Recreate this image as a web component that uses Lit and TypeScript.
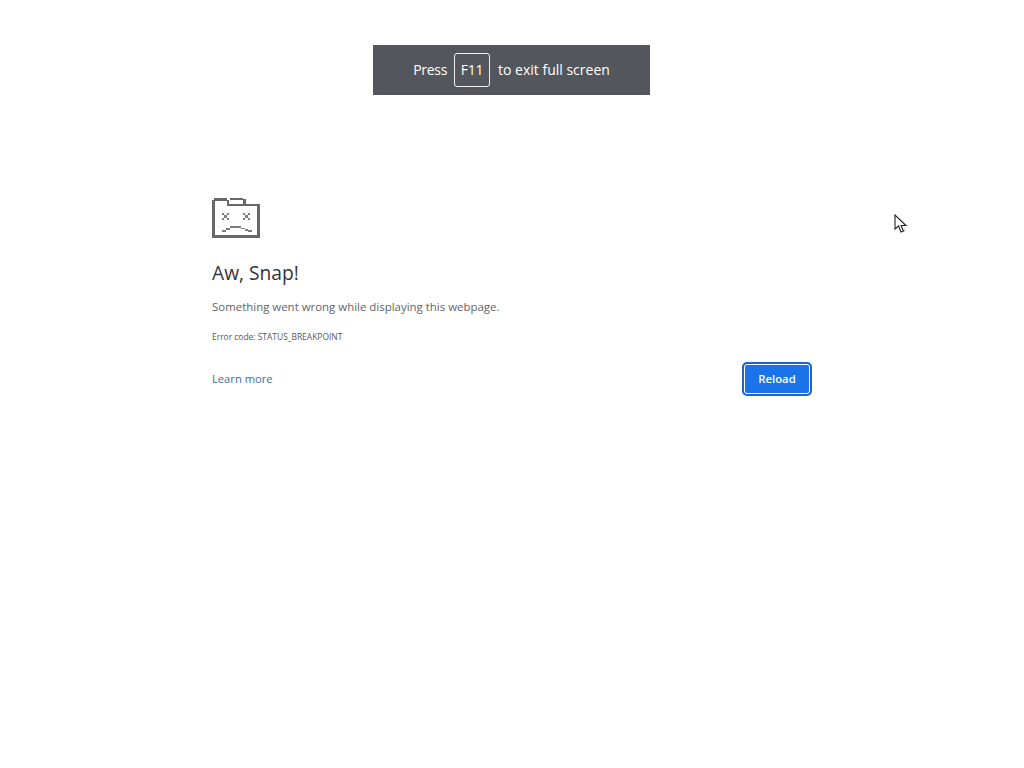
import { LitElement, html, css } from "lit";
import { customElement } from "lit/decorators.js";

@customElement("app-root")
export class AppRoot extends LitElement {
  static styles = css`
    :host {
      display: block;
      position: relative;
      width: 1024px;
      height: 768px;
      background: #fff;
      overflow: hidden;
      font-family: "Open Sans", "Noto Sans", sans-serif;
    }
    .toast {
      position: absolute;
      left: 373px;
      top: 45px;
      width: 277px;
      height: 50px;
      box-sizing: border-box;
      background: #53565c;
      color: #fff;
      font-size: 14px;
      display: flex;
      align-items: center;
      justify-content: center;
      gap: 7px;
    }
    .toast .press {
      letter-spacing: -0.3px;
      padding-bottom: 2px;
    }
    .toast .rest {
      margin-left: 1px;
      padding-bottom: 2px;
    }
    .key {
      box-sizing: border-box;
      width: 36px;
      height: 34px;
      padding-bottom: 2px;
      border: 1px solid #f1f1f1;
      border-radius: 3px;
      display: flex;
      align-items: center;
      justify-content: center;
      letter-spacing: -0.2px;
    }
    .page {
      box-sizing: border-box;
      width: 600px;
      margin-left: 212px;
      padding-top: 198px;
      display: flex;
      flex-direction: column;
    }
    .icon {
      display: block;
      width: 48px;
      height: 40px;
    }
    h1 {
      margin: 23px 0 0;
      font-size: 19.2px;
      line-height: 24px;
      font-weight: 400;
      color: #333438;
    }
    .msg {
      margin: 13px 0 0;
      font-size: 11.45px;
      line-height: 18px;
      color: #5f6368;
    }
    .code {
      margin: 14px 0 0;
      font-size: 8.45px;
      line-height: 14px;
      color: #55585c;
    }
    .actions {
      margin-top: 18px;
      display: flex;
      align-items: center;
      justify-content: space-between;
    }
    a {
      font-size: 11.2px;
      padding-bottom: 2px;
      color: #3a6ea5;
      text-decoration: none;
    }
    button {
      box-sizing: border-box;
      width: 70px;
      height: 34px;
      padding: 0 0 2px;
      background: #1a73e8;
      color: #fff;
      border: 2px solid #1a66cc;
      outline: none;
      box-shadow: inset 0 0 0 1px #fff;
      border-radius: 5px;
      font-family: inherit;
      font-size: 11.3px;
      font-weight: 600;
    }
    .cursor {
      position: absolute;
      left: 894px;
      top: 214px;
      width: 14px;
      height: 20px;
    }
  `;

  render() {
    return html`
      <div class="toast">
        <span class="press">Press</span><span class="key">F11</span><span class="rest">to exit full screen</span>
      </div>
      <main class="page">
        <svg class="icon" viewBox="0 0 48 40" shape-rendering="crispEdges" fill="none">
          <g fill="#66686d">
            <rect x="0" y="2" width="3" height="38"/>
            <rect x="0" y="37" width="48" height="3"/>
            <rect x="45" y="6" width="3" height="34"/>
            <rect x="2" y="0" width="13" height="3"/>
            <rect x="15" y="2" width="2" height="6"/>
            <rect x="15" y="6" width="33" height="2"/>
            <rect x="18" y="0" width="13" height="2"/>
            <rect x="31" y="1" width="3" height="7"/>
          </g>
          <g fill="#7b7d82">
            <rect x="10" y="15" width="2" height="2"/><rect x="15" y="15" width="2" height="2"/>
            <rect x="12" y="17" width="3" height="3"/>
            <rect x="10" y="20" width="2" height="2"/><rect x="15" y="20" width="2" height="2"/>
            <rect x="31" y="15" width="2" height="2"/><rect x="36" y="15" width="2" height="2"/>
            <rect x="33" y="17" width="3" height="3"/>
            <rect x="31" y="20" width="2" height="2"/><rect x="36" y="20" width="2" height="2"/>
            <rect x="10" y="32" width="4" height="2"/>
            <rect x="14" y="30" width="4" height="2"/>
            <rect x="18" y="28" width="11" height="2"/>
            <rect x="29" y="30" width="4" height="1"/>
            <rect x="33" y="31" width="3" height="2"/>
            <rect x="36" y="32" width="4" height="2"/>
          </g>
        </svg>
        <h1>Aw, Snap!</h1>
        <p class="msg">Something went wrong while displaying this webpage.</p>
        <p class="code">Error code: STATUS_BREAKPOINT</p>
        <div class="actions">
          <a href="#">Learn more</a>
          <button>Reload</button>
        </div>
      </main>
      <svg class="cursor" viewBox="0 0 14 20">
        <path d="M1 1 L1 15 L4.5 12 L7 18 L9.5 17 L7 11.5 L12 11.5 Z" fill="#fff" stroke="#222" stroke-width="1.1"/>
        <path d="M10 18 L12 17 L10 13 Z" fill="#bbb" opacity="0.6"/>
      </svg>
    `;
  }
}
